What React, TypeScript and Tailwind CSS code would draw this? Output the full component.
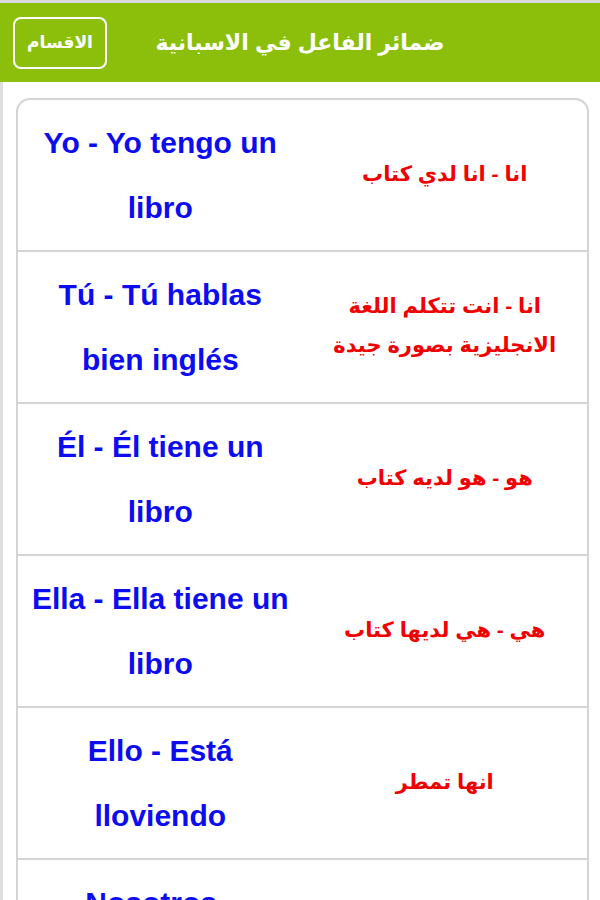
import React from "react";

type Row = { es: string; ar: string };

const rows: Row[] = [
  { es: "Yo - Yo tengo un libro", ar: "انا - انا لدي كتاب" },
  { es: "Tú - Tú hablas bien inglés", ar: "انا - انت تتكلم اللغة الانجليزية بصورة جيدة" },
  { es: "Él - Él tiene un libro", ar: "هو - هو لديه كتاب" },
  { es: "Ella - Ella tiene un libro", ar: "هي - هي لديها كتاب" },
  { es: "Ello - Está lloviendo", ar: "انها تمطر" },
  { es: "Nosotros - Nosotros tenemos un libro", ar: "نحن - نحن لدينا كتاب" },
];

export default function App() {
  return (
    <div className="min-h-screen bg-white font-['Liberation_Sans','DejaVu_Sans',sans-serif]">
      {/* Top bar */}
      <header className="flex h-[82px] items-center border-t-[3px] border-[#d8d8de] bg-[#8cbf0b] px-[13px]">
        <button className="flex h-[52px] w-[94px] items-center justify-center rounded-[8px] border-2 border-white text-[17px] font-bold text-white">
          الاقسام
        </button>
        <h1 className="flex-1 text-center text-[22px] font-bold text-white" dir="rtl">
          ضمائر الفاعل في الاسبانية
        </h1>
        <div className="w-[94px]" />
      </header>

      {/* Content */}
      <div className="flex min-h-[818px] border-l-[3px] border-[#dedede]">
        <div className="ml-[13px] mr-[11px] mt-[16px] flex-1 overflow-hidden rounded-t-[14px] border-2 border-b-0 border-[#d4d4d4]">
          {rows.map((r, i) => (
            <div key={i} className="grid grid-cols-2 border-b-2 border-[#d4d4d4]">
              <div className="px-[12px] py-[10px] text-center text-[30px] font-bold leading-[65px] text-[#0c0cf0]">
                {r.es}
              </div>
              <div
                className="flex items-center justify-center px-[28px] pb-[4px] text-center text-[21px] font-bold leading-[39px] text-[#f00000]"
                dir="rtl"
              >
                {r.ar}
              </div>
            </div>
          ))}
        </div>
      </div>
    </div>
  );
}
